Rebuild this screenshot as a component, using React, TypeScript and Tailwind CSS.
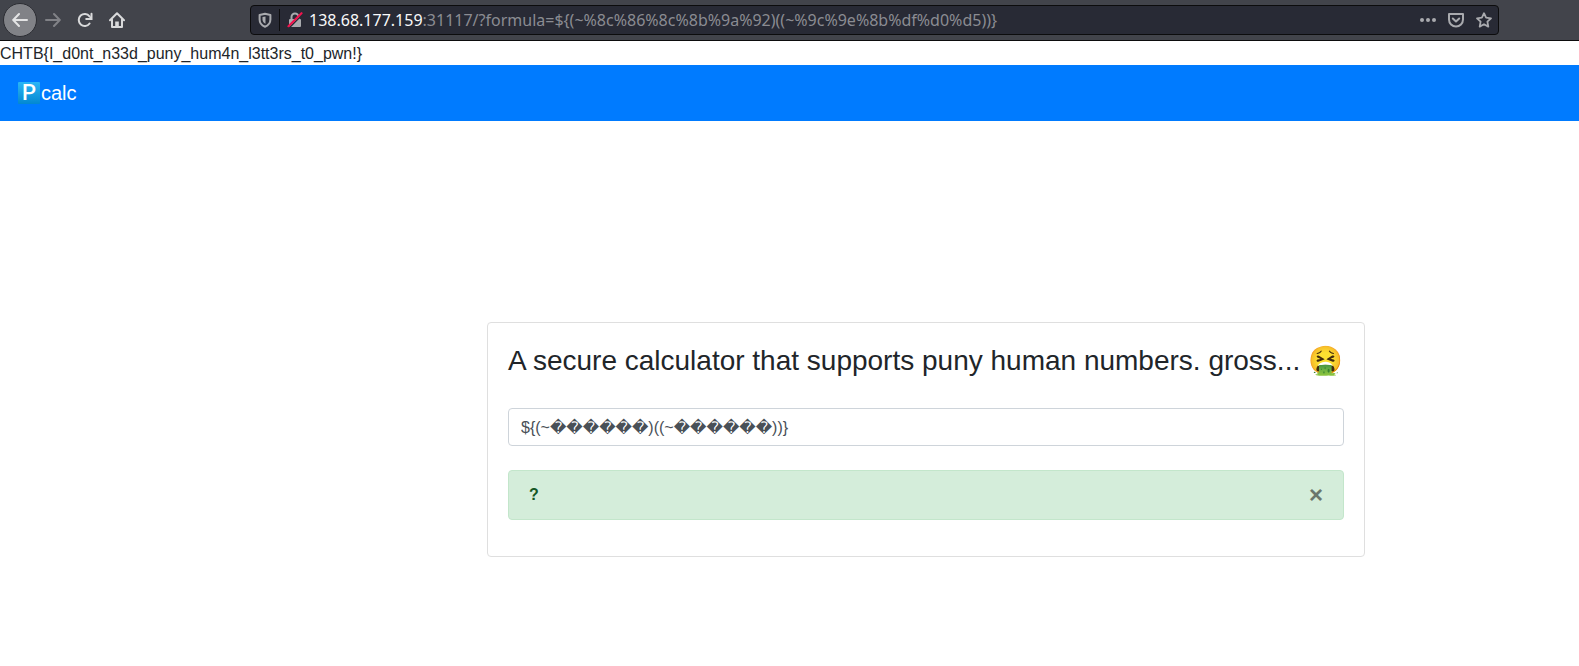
import { useState } from 'react';
import type { ReactNode } from 'react';

function ToolButton({ label, children }: { label: string; children: ReactNode }) {
  return (
    <button type="button" aria-label={label} className="flex size-8 items-center justify-center">
      {children}
    </button>
  );
}

function BrowserBar() {
  return (
    <header className="flex h-[41px] items-center border-b border-[#0c0c0d] bg-[#42444b] pr-20 pl-[3px]">
      <nav aria-label="Browser" className="flex w-[247px] shrink-0 items-center">
        <button
          type="button"
          aria-label="Back"
          className="flex size-[34px] items-center justify-center rounded-full border border-[#2c2d33] bg-[#818287] text-[#e4e4e5]"
        >
          <svg width="16" height="16" viewBox="0 0 16 16" fill="none" stroke="currentColor" strokeWidth="2" strokeLinecap="round" strokeLinejoin="round">
            <path d="M15 8H1.5M7 2 1.2 8 7 14" />
          </svg>
        </button>
        <div className="flex items-center text-[#d9dadb]">
          <button type="button" aria-label="Forward" disabled className="flex size-8 items-center justify-center text-[#818287]">
            <svg width="16" height="16" viewBox="0 0 16 16" fill="none" stroke="currentColor" strokeWidth="2" strokeLinecap="round" strokeLinejoin="round">
              <path d="M1 8h13.5M9 2l5.800 6L9 14" />
            </svg>
          </button>
          <ToolButton label="Reload">
            <svg width="16" height="16" viewBox="0 0 16 16" fill="none" stroke="currentColor" strokeWidth="2" strokeLinecap="round">
              <path d="M12.600 11.500A6 6 0 1 1 12.500 4.300" />
              <path d="M14.500 1.800v5.200H9.200" />
              <path d="M15 3v4H11z" fill="currentColor" stroke="none" />
            </svg>
          </ToolButton>
          <ToolButton label="Home">
            <svg width="16" height="16" viewBox="0 0 16 16" fill="none" stroke="currentColor" strokeWidth="2" strokeLinecap="round" strokeLinejoin="round">
              <path d="M1 8.200 8 1.200l7 7M3 7.500V15h10V7.500" />
              <path d="M6.200 15V9.500h3.600V15z" fill="currentColor" stroke="none" />
            </svg>
          </ToolButton>
        </div>
      </nav>
      <div className="flex h-[30px] min-w-0 flex-1 items-center rounded border border-[#0c0c0d] bg-[#282a35] text-[#a9aaae]">
        <button type="button" aria-label="Tracking protection" className="flex h-full w-7 shrink-0 items-center justify-center">
          <svg width="14" height="16" viewBox="0 0 14 16" fill="none" stroke="currentColor" strokeWidth="2" strokeLinejoin="round">
            <path d="M7 1.800 12.400 3v4.500c0 3.500-2.400 6-5.400 7.200-3-1.200-5.400-3.700-5.400-7.200V3z" />
            <path d="M7.500 4.500v7.300C5.500 10.800 4.500 9.400 4.500 7.500V5z" fill="currentColor" stroke="none" />
          </svg>
        </button>
        <div className="h-[22px] w-px shrink-0 bg-[#0c0c0d]" />
        <button type="button" aria-label="Connection is not secure" className="flex h-full w-[29px] shrink-0 items-center justify-center">
          <svg width="16" height="16" viewBox="0 0 16 16" fill="none">
            <path d="M4.500 7V5a3.500 3.500 0 0 1 7 0v2" stroke="currentColor" strokeWidth="2" />
            <rect x="2" y="7" width="12" height="8" rx="1" fill="currentColor" />
            <path d="M2.500 15.500 15.800 2.200" stroke="#282a35" strokeWidth="1.500" />
            <path d="M1.500 14.200 14.500 1.200" stroke="#f0134d" strokeWidth="2.200" strokeLinecap="round" />
          </svg>
        </button>
        <div className="min-w-0 flex-1 truncate font-['Noto_Sans',sans-serif] text-base leading-6 text-[#8b8c92]">
          <span className="text-[#f9f9fa]">138.68.177.159</span>
          {':31117/?formula=${(~%8c%86%8c%8b%9a%92)((~%9c%9e%8b%df%d0%d5))}'}
        </div>
        <div className="flex shrink-0 items-center gap-3 pr-[6px]">
          <button type="button" aria-label="Page actions">
            <svg width="16" height="16" viewBox="0 0 16 16" fill="currentColor">
              <circle cx="2" cy="8" r="2" />
              <circle cx="8" cy="8" r="2" />
              <circle cx="14" cy="8" r="2" />
            </svg>
          </button>
          <button type="button" aria-label="Save to Pocket">
            <svg width="16" height="16" viewBox="0 0 16 16" fill="none" stroke="currentColor" strokeWidth="2" strokeLinecap="round" strokeLinejoin="round">
              <path d="M1 2h14v5.500a7 7 0 0 1-14 0z" />
              <path d="M4.800 6.500 8 9.500l3.200-3" />
            </svg>
          </button>
          <button type="button" aria-label="Bookmark this page">
            <svg width="16" height="16" viewBox="0 0 16 16" fill="none" stroke="currentColor" strokeWidth="1.800" strokeLinejoin="round">
              <path d="m8 1.200 2.100 4.500 4.900.6-3.600 3.400.9 4.900L8 12.200l-4.300 2.400.9-4.900L1 6.300l4.900-.6z" />
            </svg>
          </button>
        </div>
      </div>
    </header>
  );
}

export default function App() {
  const [formula, setFormula] = useState('${(~\uFFFD\uFFFD\uFFFD\uFFFD\uFFFD\uFFFD)((~\uFFFD\uFFFD\uFFFD\uFFFD\uFFFD\uFFFD))}');
  const [open, setOpen] = useState(true);

  return (
    <div className="min-h-screen bg-white font-['Liberation_Sans','DejaVu_Sans',sans-serif] text-base leading-6 text-[#212529]">
      <BrowserBar />
      <p className="h-6 leading-[26px]">{'CHTB{I_d0nt_n33d_puny_hum4n_l3tt3rs_t0_pwn!}'}</p>
      <nav aria-label="Main" className="flex h-14 items-center bg-[#007bff] px-4">
        <a href="#" className="flex items-center gap-px pl-[2px] text-xl leading-[30px] text-white">
          <span className="flex size-[22px] items-center justify-center rounded-[1px] bg-linear-to-b from-[#29b6f6] to-[#0288d1] font-['Roboto',sans-serif] text-[22px] leading-6 font-medium">
            P
          </span>
          calc
        </a>
      </nav>
      <main className="flex justify-center pt-[201px] pb-10 pl-[273px]">
        <section className="w-[878px] max-w-full rounded border border-[#dfdfdf] p-5">
          <h1 className="mb-[29px] text-[28px] leading-[36px]">
            <label htmlFor="formula">A secure calculator that supports puny human numbers. gross... 🤮</label>
          </h1>
          <input
            id="formula"
            type="text"
            value={formula}
            onChange={(e) => setFormula(e.target.value)}
            className="mb-6 block h-[38px] w-full rounded border border-[#ced4da] px-3 text-[#495057]"
          />
          {open && (
            <div role="alert" className="mb-4 flex h-[50px] items-center justify-between rounded border border-[#c3e6cb] bg-[#d4edda] px-5 text-[#155724]">
              <strong className="leading-[26px]">?</strong>
              <button type="button" aria-label="Close" onClick={() => setOpen(false)} className="text-2xl leading-6 font-bold text-[#6a776d]">
                ×
              </button>
            </div>
          )}
        </section>
      </main>
    </div>
  );
}
